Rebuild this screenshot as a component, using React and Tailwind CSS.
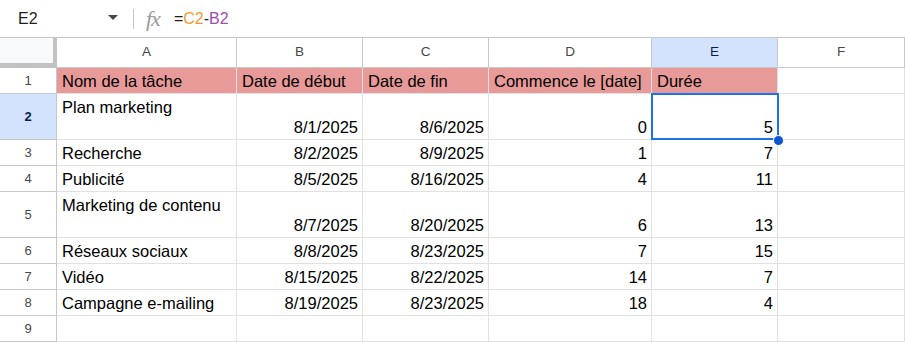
const cols = ['A', 'B', 'C', 'D', 'E', 'F']
const colWidths = 'grid-cols-[57px_180px_126px_126px_163px_126px_127px]'

const rows = [
  { n: 1, h: 'h-[26px]', head: true, cells: ['Nom de la tâche', 'Date de début', 'Date de fin', 'Commence le [date]', 'Durée'] },
  { n: 2, h: 'h-[46px]', cells: ['Plan marketing', '8/1/2025', '8/6/2025', '0', '5'], tall: true, selected: true },
  { n: 3, h: 'h-[26px]', cells: ['Recherche', '8/2/2025', '8/9/2025', '1', '7'] },
  { n: 4, h: 'h-[26px]', cells: ['Publicité', '8/5/2025', '8/16/2025', '4', '11'] },
  { n: 5, h: 'h-[46px]', cells: ['Marketing de contenu', '8/7/2025', '8/20/2025', '6', '13'], tall: true },
  { n: 6, h: 'h-[26px]', cells: ['Réseaux sociaux', '8/8/2025', '8/23/2025', '7', '15'] },
  { n: 7, h: 'h-[26px]', cells: ['Vidéo', '8/15/2025', '8/22/2025', '14', '7'] },
  { n: 8, h: 'h-[26px]', cells: ['Campagne e-mailing', '8/19/2025', '8/23/2025', '18', '4'] },
  { n: 9, h: 'h-[26px]', cells: [] },
]

const FormulaBar = () => (
  <div className="h-[38px] flex items-center border-b border-[#c7c7c7] bg-white text-[#1f1f1f]">
    <div className="w-[133px] flex items-center pl-[18px] pr-[15px]">
      <span className="flex-1 text-[16px]">E2</span>
      <svg width="10" height="6" viewBox="0 0 10 6" className="mb-[1px]">
        <path d="M0 0 L10 0 L5 5 Z" fill="#444746" />
      </svg>
    </div>
    <div className="w-px h-[20px] bg-[#c4c7c5]" />
    <span className="ml-[12px] italic text-[22px] leading-none text-[#9a9a9a] font-['Liberation_Serif',serif] tracking-[-1px]">fx</span>
    <span className="ml-[14px] text-[16px]">
      =<span className="text-[#f29a2e]">C2</span>-<span className="text-[#9b4db2]">B2</span>
    </span>
  </div>
)

const Cell = ({ value, idx, row }) => {
  const right = idx > 0 && !row.head
  const fill = row.head && idx < 5 ? 'bg-[#e89a98]' : 'bg-white'
  if (idx === 0 && row.tall) {
    return (
      <div className={`${fill} border-r border-b border-[#e1e1e1] px-[5px] pt-[4px] leading-[19px] truncate`}>
        {value}
      </div>
    )
  }
  return (
    <div className={`${fill} border-r border-b border-[#e1e1e1] flex items-end px-[5px] pb-[2px] leading-[19px] whitespace-nowrap overflow-hidden ${right ? 'justify-end pr-[4px]' : ''}`}>
      {value}
    </div>
  )
}

export default function App() {
  return (
    <div className="w-[905px] h-[342px] overflow-hidden bg-white font-['Liberation_Sans',Arial,sans-serif]">
      <FormulaBar />
      <div className="relative">
        <div className={`grid ${colWidths}`}>
          <div className="h-[30px] bg-[#f8f9fa] border-r-[4px] border-b-[5px] border-[#c2c2c2]" />
          {cols.map((c) => (
            <div
              key={c}
              className={`h-[30px] flex items-center justify-center border-r border-b border-[#c7c7c7] text-[13.5px] ${c === 'E' ? 'bg-[#d3e3fd] text-[#041e49]' : 'bg-white text-[#444746]'}`}
            >
              {c}
            </div>
          ))}
          {rows.map((row) => (
            <div key={row.n} className="contents text-[16.5px] text-black">
              <div
                className={`${row.h} flex items-center justify-center border-r border-b border-[#c7c7c7] text-[13px] ${row.selected ? 'bg-[#d3e3fd] text-[#041e49] font-bold' : 'bg-white text-[#444746]'}`}
              >
                {row.n}
              </div>
              {cols.map((c, i) => (
                <Cell key={c} value={row.cells[i] ?? ''} idx={i} row={row} />
              ))}
            </div>
          ))}
        </div>
        <div className="absolute left-[651px] top-[55px] w-[128px] h-[47px] border-2 border-[#1a73e8]" />
        <div className="absolute left-[773px] top-[97px] w-[11px] h-[11px] rounded-full bg-[#0b57d0] border border-white" />
      </div>
    </div>
  )
}
